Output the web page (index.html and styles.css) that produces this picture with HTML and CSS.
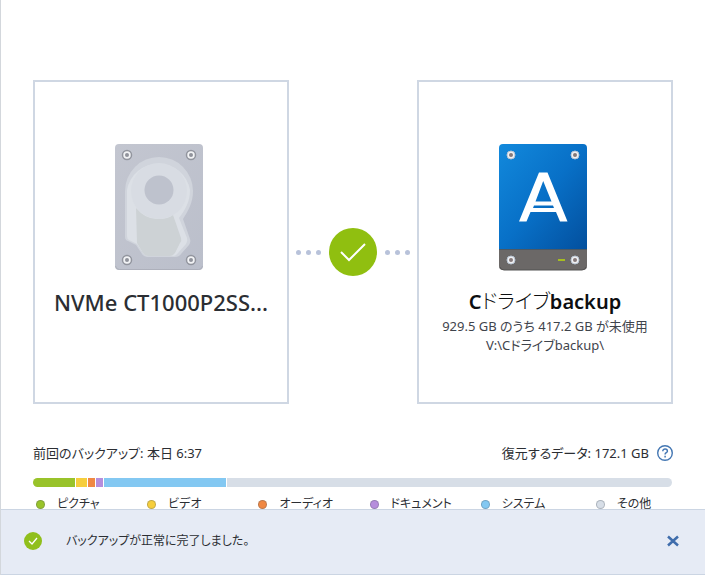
FILE: index.html
```html
<!DOCTYPE html>
<html lang="ja">
<head>
<meta charset="utf-8">
<meta name="viewport" content="width=device-width, initial-scale=1">
<title>バックアップ</title>
<link rel="stylesheet" href="styles.css">
</head>
<body>
<main class="content">
  <div class="route">
    <section class="card">
      <svg class="drive" viewBox="0 0 88 127" aria-hidden="true">
        <defs>
          <linearGradient id="metal" x1="0" y1="0" x2="1" y2="1">
            <stop offset="0" stop-color="#c3c6d0"/><stop offset="1" stop-color="#bbbfcb"/>
          </linearGradient>
        </defs>
        <rect width="88" height="126" rx="4" fill="url(#metal)"/>
        <path d="M0.500 122a4 4 0 0 0 4 3.500h79a4 4 0 0 0 4-3.500" fill="none" stroke="#adb0bb"/>
        <path d="M10 47a34 34 0 0 1 68 0c0 12-5 20-10 28l7 20q1 3-1 6l-8 9q-2 3-6 3H32q-3 0-5-3l-6-9-8-4q-3-1-3-4z" fill="#d0d4dc"/>
        <path d="M12 46a32 32 0 0 1 63 0c0 12-5 20-11 28l8 20q1 3-1 6l-8 9q-2 3-5 3H33q-3 0-5-3l-6-9-8-4q-2-1-2-4z" fill="#dce0e6"/>
        <path d="M21 64q10 12 23 11 9 0 14-4l8 23q1 3-1 5l-5 10q-2 3-5 3H33q-3 0-5-3l-6-10z" fill="#cdd2d5"/>
        <circle cx="44" cy="47" r="28" fill="#d8dce3"/>
        <circle cx="44" cy="46" r="14.500" fill="#bec2cd"/>
        <g fill="#f2f3f5" stroke="#92959e" stroke-width="1.500">
          <circle cx="12" cy="11" r="4.500"/><circle cx="76" cy="11" r="4.500"/><circle cx="12" cy="116" r="4.500"/><circle cx="76" cy="116" r="4.500"/>
        </g>
        <g fill="#90939b">
          <circle cx="12" cy="11" r="2"/><circle cx="76" cy="11" r="2"/><circle cx="12" cy="116" r="2"/><circle cx="76" cy="116" r="2"/>
        </g>
      </svg>
      <h2 class="name source">NVMe CT1000P2SS...</h2>
    </section>
    <div class="link">
      <span class="dots"><i></i><i></i><i></i></span>
      <svg class="done" viewBox="0 0 48 48" role="img" aria-label="完了">
        <circle cx="24" cy="24" r="24" fill="#90bf10"/>
        <path d="M12 24l8 8 16-16" fill="none" stroke="#fff" stroke-width="2"/>
      </svg>
      <span class="dots"><i></i><i></i><i></i></span>
    </div>
    <section class="card">
      <svg class="drive" viewBox="0 0 88 127" aria-hidden="true">
        <defs>
          <linearGradient id="blue" x1="0" y1="0" x2="1" y2="1">
            <stop offset="0" stop-color="#1289dc"/><stop offset=".5" stop-color="#0870c7"/><stop offset="1" stop-color="#034f9d"/>
          </linearGradient>
        </defs>
        <path d="M0 106V4a4 4 0 0 1 4-4h80a4 4 0 0 1 4 4v102z" fill="url(#blue)"/>
        <path d="M0 105h88v17a4 4 0 0 1-4 4H4a4 4 0 0 1-4-4z" fill="#6b6867"/>
        <path d="M0 105.500h88" stroke="#4b5965"/>
        <path d="M1 123q1 3 4 3h78q3 0 4-3" fill="none" stroke="#535252"/>
        <path d="M40 28.500h8.500L68.500 77.500h-7.500L57 68H31.500l-4 9.500H20zM44.200 37L36.500 57.500h16zM35 61.500l-1 2.500h21l-1-2.500z" fill="#fff" fill-rule="evenodd"/>
        <g fill="#f0f0f2" stroke="#b8c5d4">
          <circle cx="12" cy="11" r="4"/><circle cx="76" cy="11" r="4"/><circle cx="12" cy="116" r="4"/><circle cx="76" cy="116" r="4"/>
        </g>
        <g fill="#85797a">
          <circle cx="12" cy="11" r="2"/><circle cx="76" cy="11" r="2"/><circle cx="12" cy="116" r="2"/><circle cx="76" cy="116" r="2"/>
        </g>
        <path d="M59 116h7" stroke="#a6bd20" stroke-width="2"/>
      </svg>
      <h2 class="name"><b>C</b>ドライブ<b>backup</b></h2>
      <p class="detail">929.5 GB のうち 417.2 GB が未使用</p>
      <p class="detail">V:\Cドライブbackup\</p>
    </section>
  </div>
  <div class="summary">
    <span>前回のバックアップ: 本日 6:37</span>
    <span class="restore">復元するデータ: 172.1 GB
      <button class="icon-button" type="button" aria-label="ヘルプ">
        <svg width="16" height="16" viewBox="0 0 16 16"><circle cx="8" cy="8" r="7.300" fill="none" stroke="#4477b3" stroke-width="1.400"/><path d="M5.800 6.200c0-3 4.600-2.800 4.600 0 0 1.600-2.300 1.500-2.300 3.300M8.100 10.700v1.700" fill="none" stroke="#4477b3" stroke-width="1.500"/></svg>
      </button>
    </span>
  </div>
  <div class="usage">
    <span class="pictures"></span><span class="video"></span><span class="audio"></span><span class="documents"></span><span class="system"></span><span class="other"></span>
  </div>
  <ul class="legend">
    <li><i class="pictures"></i>ピクチャ</li>
    <li><i class="video"></i>ビデオ</li>
    <li><i class="audio"></i>オーディオ</li>
    <li><i class="documents"></i>ドキュメント</li>
    <li><i class="system"></i>システム</li>
    <li><i class="other"></i>その他</li>
  </ul>
</main>
<footer class="notice" role="status">
  <svg width="18" height="18" viewBox="0 0 18 18" aria-hidden="true"><circle cx="9" cy="9" r="9" fill="#90bf1c"/><path d="M5 9l3 3 5-6" fill="none" stroke="#fff" stroke-width="1.300"/></svg>
  <p class="message">バックアップが正常に完了しました。</p>
  <button class="icon-button" type="button" aria-label="閉じる">
    <svg width="16" height="16" viewBox="0 0 16 16"><path d="M3 3.500l10 9M13 3.500l-10 9" stroke="#3f6dac" stroke-width="2.500"/></svg>
  </button>
</footer>
</body>
</html>
```

FILE: styles.css
```css
* {
  box-sizing: border-box;
}

body {
  margin: 0;
  height: 100vh;
  display: flex;
  flex-direction: column;
  border-left: 1px solid #d3d7dc;
  background: #fff;
  color: #2b2e33;
  font-family: "Noto Sans", "Noto Sans CJK JP", sans-serif;
  font-size: 13px;
  line-height: 20px;
  font-feature-settings: "palt";
}

h2,
p,
ul {
  margin: 0;
  padding: 0;
}

.content {
  flex: 1;
  min-height: 0;
  overflow: hidden;
  padding: 80px 32px 0;
}

.route {
  display: grid;
  grid-template-columns: 2fr 1fr 2fr;
}

.card {
  display: flex;
  flex-direction: column;
  align-items: center;
  min-width: 0;
  min-height: 324px;
  padding: 62px 16px 16px;
  border: 2px solid #cfd7e3;
  white-space: nowrap;
}

.drive {
  width: 88px;
  height: 127px;
  margin-right: 4px;
}

.name {
  margin-top: 16px;
  font-size: 20px;
  line-height: 30px;
  font-weight: 300;
  color: #0c0e10;
}

.name b {
  font-weight: 600;
}

.source {
  font-size: 22px;
  font-weight: 500;
  color: #2b2e33;
}

.detail {
  line-height: 19px;
  color: #3f444c;
}

.link {
  display: flex;
  align-items: center;
  justify-content: center;
  gap: 8px;
  padding-top: 20px;
}

.done {
  width: 48px;
  height: 48px;
}

.dots {
  display: flex;
  gap: 5px;
}

.dots i {
  width: 5px;
  height: 5px;
  border-radius: 50%;
  background: #b8c2da;
}

.summary {
  display: flex;
  justify-content: space-between;
  margin-top: 39px;
}

.restore {
  display: flex;
  align-items: center;
  gap: 8px;
}

.icon-button {
  display: flex;
  padding: 0;
  border: 0;
  background: none;
  cursor: pointer;
}

.usage {
  display: flex;
  gap: 1px;
  height: 9px;
  margin: 15px 1px 0 0;
  border-radius: 5px;
  overflow: hidden;
}

.usage .pictures { flex: 42; }
.usage .video { flex: 11; }
.usage .audio { flex: 7; }
.usage .documents { flex: 7; }
.usage .system { flex: 122; }
.usage .other { flex: 446; }

.pictures { background: #99c32a; }
.video { background: #f6ce3c; }
.audio { background: #f08843; }
.documents { background: #b68edc; }
.system { background: #83c8f2; }
.other { background: #d7dee7; }

.legend {
  display: grid;
  grid-template-columns: repeat(4, 111fr) 115fr 77fr;
  margin-top: 7px;
  padding-left: 3px;
  font-size: 12px;
  list-style: none;
  white-space: nowrap;
}

.legend li {
  display: flex;
  align-items: center;
  gap: 12px;
}

.legend i {
  width: 9px;
  height: 9px;
  border-radius: 50%;
  border: 1px solid rgb(70 80 90 / 30%);
}

.notice {
  display: flex;
  align-items: center;
  gap: 24px;
  min-height: 66px;
  padding: 0 24px 2px 23px;
  border-top: 1px solid #cbd5e3;
  border-bottom: 1px solid #cbd5e3;
  background: #e6ebf5;
}

.message {
  flex: 1;
  font-size: 12px;
}
```
